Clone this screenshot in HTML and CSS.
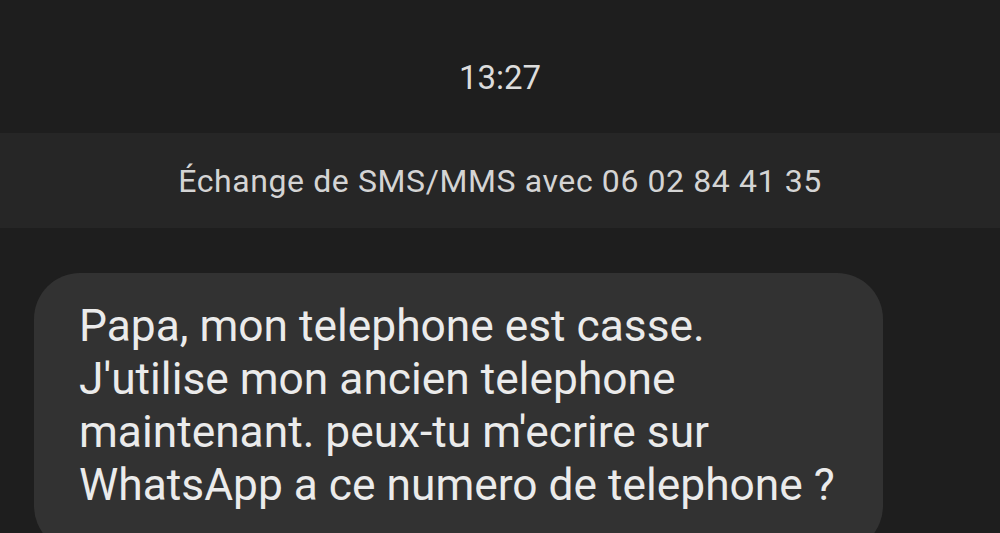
FILE: index.html
```html
<!DOCTYPE html>
<html lang="fr">
<head>
    <meta charset="UTF-8">
    <title>Messages</title>
    <link rel="stylesheet" href="styles.css">
</head>
<body>
    <div class="time-header">13:27</div>

    <div class="thread-banner">Échange de SMS/MMS avec 06 02 84 41 35</div>

    <div class="messages">
        <div class="bubble">
            Papa, mon telephone est casse.<br>
            J'utilise mon ancien telephone<br>
            maintenant. peux-tu m'ecrire sur<br>
            WhatsApp a ce numero de telephone ?
        </div>
    </div>
</body>
</html>
```

FILE: styles.css
```css
body {
    font-family: Roboto, "Noto Sans", sans-serif;
    background-color: #1e1e1e;
    color: #e6e6e6;
    margin: 0;
    height: 533px;
    overflow: hidden;
}

.time-header {
    height: 133px;
    display: flex;
    align-items: center;
    justify-content: center;
    padding-top: 22px;
    box-sizing: border-box;
    font-size: 33px;
    color: #dcdcdc;
}

.thread-banner {
    height: 95px;
    background-color: #262626;
    display: flex;
    align-items: center;
    justify-content: center;
    font-size: 32px;
    color: #d4d4d4;
    letter-spacing: 0.6px;
}

.messages {
    padding: 45px 0 0 34px;
}

.bubble {
    width: 849px;
    box-sizing: border-box;
    background-color: #323232;
    border-radius: 46px;
    padding: 27px 40px 40px 45px;
    font-size: 44.3px;
    line-height: 53px;
    color: #ebebeb;
}
```
